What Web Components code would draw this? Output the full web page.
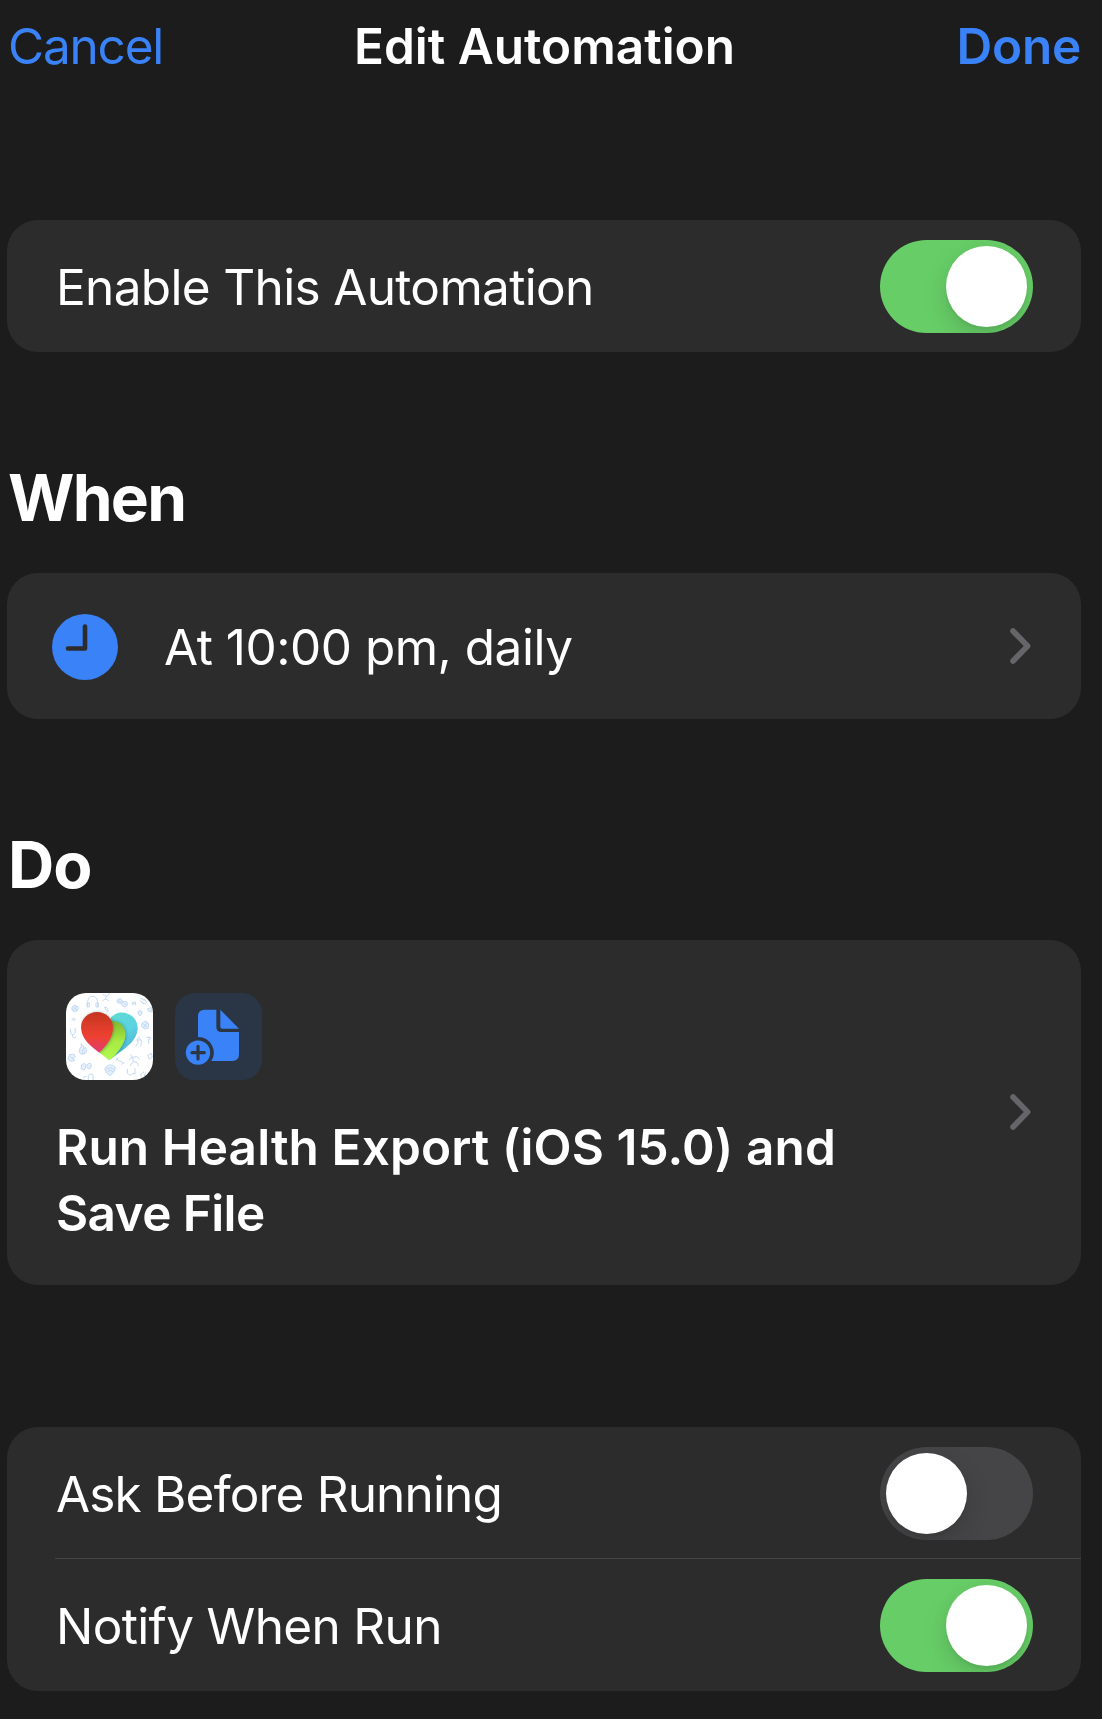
<!DOCTYPE html>
<html lang="en">
<head>
<meta charset="utf-8">
<title>Edit Automation</title>
<style>
  html, body { margin: 0; background: #1c1c1c; }
  body { font-family: Inter, "Liberation Sans", sans-serif; color: #fff; }
</style>
</head>
<body>
<automation-page></automation-page>
<script>
const define = (name, html) => customElements.define(name, class extends HTMLElement {
  constructor() {
    super();
    const t = document.createElement('template');
    t.innerHTML = html;
    this.attachShadow({ mode: 'open' }).append(t.content.cloneNode(true));
  }
});

define('nav-header', `
<style>
  :host { display: flex; justify-content: space-between; align-items: center; height: 92px; padding: 0 21px 0 8px; font-size: 49.5px; line-height: 60px; white-space: nowrap; }
  .side { color: #3a82f7; flex: 1 1 0; }
  .title { font-weight: 600; }
  .done { font-weight: 600; text-align: right; }
</style>
<div class="side"><slot name="left"></slot></div>
<div class="title"><slot></slot></div>
<div class="side done"><slot name="right"></slot></div>`);

define('section-title', `
<style>
  :host { display: block; font-size: 64px; line-height: 76px; font-weight: 700; }
</style><slot></slot>`);

define('setting-card', `
<style>
  :host { display: flex; flex-direction: column; background: #2c2c2c; border-radius: 31px; overflow: hidden; }
</style><slot></slot>`);

define('setting-row', `
<style>
  :host { display: flex; align-items: center; justify-content: space-between; box-sizing: border-box; height: 132px; padding: 0 48px; font-size: 49.5px; line-height: 60px; white-space: nowrap; }
  .label { padding: 2px 0 0 1px; display: flex; align-items: center; }
</style><div class="label"><slot></slot></div><slot name="end"></slot>`);

define('row-divider', `<style>:host { display: block; height: 1px; margin: -1px 0 0 48px; background: #454545; }</style>`);

define('toggle-switch', `
<style>
  :host { display: flex; box-sizing: border-box; width: 153px; height: 93px; padding: 6px; border-radius: 47px; background: #454547; overflow: hidden; }
  :host([on]) { background: #67ce67; justify-content: flex-end; }
  i { width: 81px; height: 81px; border-radius: 50%; background: #fff; box-shadow: 0 9px 24px rgba(0,0,0,.15), 0 3px 3px rgba(0,0,0,.05); }
</style><i></i>`);

define('chevron-icon', `
<style>:host { display: block; width: 22px; height: 38px; margin-right: 2px; } svg { display: block; }</style>
<svg width="22" height="38" viewBox="0 0 22 38" fill="none" stroke="#66666a" stroke-width="5.6" stroke-linecap="round" stroke-linejoin="round"><path d="M4 4L18.6 19L4 34"/></svg>`);

define('clock-icon', `
<style>:host { display: block; width: 66px; height: 66px; } svg { display: block; }</style>
<svg width="66" height="66" viewBox="0 0 66 66"><circle cx="33" cy="33" r="33" fill="#3a82f7"/><path d="M33 12.5V34.5H16" fill="none" stroke="#2c2c2c" stroke-width="4.6" stroke-linecap="round" stroke-linejoin="round"/></svg>`);

define('health-icon', `
<style>:host { display: block; width: 87px; height: 87px; border-radius: 20px; overflow: hidden; background: #fff; } svg { display: block; }</style>
<svg width="87" height="87" viewBox="48 39 261 261">
  <defs>
    <linearGradient id="r" x1="0" y1="0" x2="0" y2="1"><stop offset="0" stop-color="#c4351f"/><stop offset=".6" stop-color="#ee4132"/><stop offset="1" stop-color="#e23a72"/></linearGradient>
    <linearGradient id="g" x1="0" y1="0" x2="0" y2="1"><stop offset="0" stop-color="#7fb92f"/><stop offset=".5" stop-color="#a6ea43"/><stop offset="1" stop-color="#b4fb4e"/></linearGradient>
    <linearGradient id="t" x1="0" y1="0" x2=".6" y2="1"><stop offset="0" stop-color="#5fe0cc"/><stop offset=".6" stop-color="#5cd2e2"/><stop offset="1" stop-color="#4cb2d6"/></linearGradient>
    <filter id="s" x="-30%" y="-30%" width="160%" height="160%"><feDropShadow dx="2" dy="1" stdDeviation="4" flood-color="#134" flood-opacity=".4"/></filter>
    <clipPath id="h"><path d="M178 241C150 215 93 190 93 143A48 47 0 0 1 183 112A47 47 0 0 1 263 143C263 188 212 212 178 241Z"/></clipPath>
  </defs>
  <g fill="#e4effb" stroke="#c3d9f3" stroke-width="3" stroke-linecap="round" stroke-linejoin="round">
    <path d="M66 88q-2-10 8-12q10 0 11 9q-2 11-12 10q-6-1-7-7zM71 80l10 10M81 80l-10 10"/>
    <path fill="none" d="M113 78v-14q3-15 15-15t15 15v14M111 70v11h7v-11zM138 70v11h7v-11z"/>
    <path fill="none" d="M160 44l9 5l9-7M169 49l-3 8l-8 5M166 56l10 6M164 82l8 13M166 81q7 0 8 12"/>
    <path d="M202 60l9-5l7 8l-7 8l-9-4zM217 66l12-2l5 8l-9 10l-9-6zM206 62l6 4M222 71l6 4M246 70l9 0M249 65v10M256 65v10"/>
    <path d="M272 56l12 2l7 11M272 62q3 11 14 9M264 96q4-9 12-2q2 9-6 14q-6-4-6-12zM294 86l10-4v14l-9-3z"/>
    <path fill="none" d="M66 118q5-8 10 0q-4 8-10 0M61 148l2 14q8 5 13-3l-1-14M68 164v7q5 6 10-1"/>
    <path d="M276 130l10-7l10 7l-2 15l-9 2l-9-6zM280 132l11 9M291 129l-10 13"/>
    <path fill="none" d="M268 170l-7 10l4 8l-7 10M269 176l6 8l-3 14M261 180h12M290 172h12l-3 6h-3v13"/>
    <path d="M94 192q2 9-5 15q-5 10 4 15q11 3 17-6q2-8-4-14l-3 5q-2-11-9-15zM98 219q-3-7 2-11q5 6 2 11"/>
    <path d="M60 224l11-2l5 8l-6 5l4 7l-11 2l-8-6zM61 230l8 7M96 254q9-8 12 2l-3 12q-6 5-11-1zM112 253q9-7 12 1l-2 10q-6 5-10 0z"/>
    <path fill="none" d="M200 235l6 8l8 1l5 7M198 242l6-8M215 253l6-6M242 224l5 8l-10 7M247 232l13-2l8 6M248 234l2 12l-10 11M251 245l10 2l4 10"/>
    <path d="M167 262l9-7q18-2 20 9q-2 15-16 23q-11-5-15-17zM171 266q12-7 20 1M173 273q9-5 15 1"/>
    <path fill="none" d="M115 300v-14q6-8 14-2v16M232 268v12q8 11 17-1l6 4v-17M273 291q-2-13 8-15M286 278l-4 15M55 277l8 5l-1 8M294 225l10-5l3 11l-8 6zM100 292l8-3"/>
  </g>
  <path d="M178 241L150 215L183 112A47 47 0 0 1 263 143C263 188 212 212 178 241Z" fill="url(#t)"/>
  <g clip-path="url(#h)"><path d="M179 243L145 217L172 125Q180 122 194 124C214 127 226 143 226 163C226 195 200 219 179 243Z" fill="url(#g)" filter="url(#s)"/>
  <path d="M147 218C122 199 93 175 93 143A48 47 0 0 1 189 143C189 172 170 197 147 218Z" fill="url(#r)" filter="url(#s)"/></g>
</svg>`);

define('file-icon', `
<style>:host { display: block; width: 87px; height: 87px; border-radius: 20px; overflow: hidden; background: #2a3646; } svg { display: block; }</style>
<svg width="87" height="87" viewBox="30 39 261 261" fill="#3a82f7">
  <path d="M99 171V109Q99 89 119 89H154V141Q154 156 169 156H222V223Q222 243 202 243H139A47 47 0 0 0 99 171Z"/>
  <path d="M166 89L222 146H172Q166 146 166 140Z"/>
  <circle cx="99" cy="218" r="36.5"/>
  <path d="M81 218H118M99 199V237" stroke="#2a3646" stroke-width="9.5" stroke-linecap="round"/>
</svg>`);

define('action-summary', `
<style>
  :host { display: flex; align-items: center; justify-content: space-between; box-sizing: border-box; height: 345px; padding: 0 48px; }
  .body { display: flex; flex-direction: column; gap: 34px; align-self: flex-start; padding-top: 53px; }
  .icons { display: flex; gap: 22px; padding-left: 11px; }
  .text { padding-left: 1px; font-size: 49.5px; line-height: 66px; font-weight: 600; white-space: nowrap; }
  ::slotted(chevron-icon) { margin-bottom: 1px; }
</style>
<div class="body"><div class="icons"><slot name="icons"></slot></div><div class="text"><slot></slot></div></div><slot name="end"></slot>`);

define('automation-page', `
<style>
  :host { display: flex; flex-direction: column; box-sizing: border-box; height: 1719px; overflow: hidden; }
  main { display: flex; flex-direction: column; padding: 128px 21px 0 7px; }
  clock-icon { margin: 0 46px 0 -4px; }
  section-title { margin: 108px 0 37px 1px; }
  .tall { height: 146px; }
  .options { margin-top: 142px; }
  .cancel { letter-spacing: -1.2px; }
  .done { letter-spacing: -.2px; margin-right: -.2px; }
  .enable, .notify { letter-spacing: -.66px; }
  .when { letter-spacing: -1.75px; }
  .at { letter-spacing: -.49px; }
  .do { letter-spacing: -.9px; }
  .run { letter-spacing: .1px; }
  .save { letter-spacing: -.6px; }
  .ask { letter-spacing: -.83px; }
</style>
<nav-header><span slot="left" class="cancel">Cancel</span><span>Edit Automation</span><span slot="right" class="done">Done</span></nav-header>
<main>
  <setting-card><setting-row><span class="enable">Enable This Automation</span><toggle-switch slot="end" on></toggle-switch></setting-row></setting-card>
  <section-title><span class="when">When</span></section-title>
  <setting-card><setting-row class="tall"><clock-icon></clock-icon><span class="at">At 10:00 pm, daily</span><chevron-icon slot="end"></chevron-icon></setting-row></setting-card>
  <section-title><span class="do">Do</span></section-title>
  <setting-card><action-summary><health-icon slot="icons"></health-icon><file-icon slot="icons"></file-icon><span class="run">Run Health Export (iOS 15.0) and</span><br><span class="save">Save File</span><chevron-icon slot="end"></chevron-icon></action-summary></setting-card>
  <setting-card class="options"><setting-row><span class="ask">Ask Before Running</span><toggle-switch slot="end"></toggle-switch></setting-row><row-divider></row-divider><setting-row><span class="notify">Notify When Run</span><toggle-switch slot="end" on></toggle-switch></setting-row></setting-card>
</main>`);
</script>
</body>
</html>
